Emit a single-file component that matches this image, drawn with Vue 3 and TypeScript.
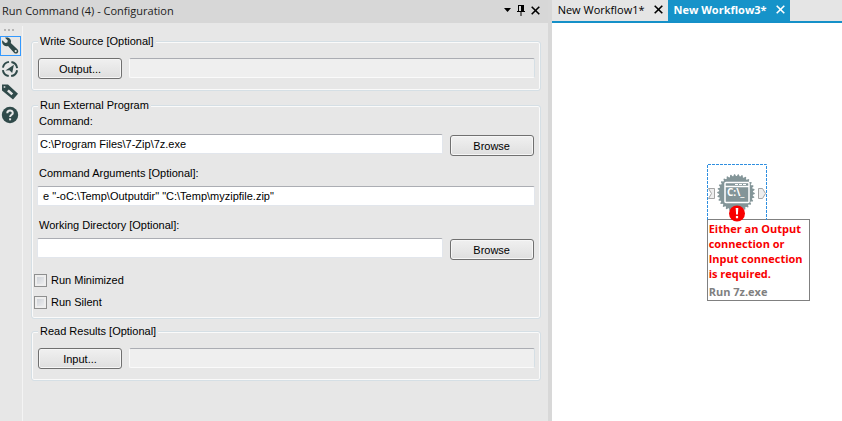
<script setup lang="ts">
import { ref } from 'vue'

interface Tab {
  id: number
  title: string
}

const tabs: Tab[] = [
  { id: 1, title: 'New Workflow1*' },
  { id: 3, title: 'New Workflow3*' },
]
const activeTab = ref(3)

const command = ref('C:\\Program Files\\7-Zip\\7z.exe')
const commandArgs = ref(' e "-oC:\\Temp\\Outputdir" "C:\\Temp\\myzipfile.zip"')
const workingDir = ref('')
const runMinimized = ref(false)
const runSilent = ref(false)

/* Outline of the toothed badge behind the tool glyph */
const teeth = 30
const gear = Array.from({ length: teeth * 4 }, (_, i) => {
  const r = i % 4 < 2 ? 18.8 : 17
  const a = (i / (teeth * 4)) * Math.PI * 2
  return `${(19 + r * Math.cos(a)).toFixed(2)},${(19 + r * Math.sin(a)).toFixed(2)}`
}).join(' ')
</script>

<template>
  <div class="app">
    <section class="panel">
      <header class="titlebar">
        <h1>Run Command (4) - Configuration</h1>
        <div class="window-tools">
          <button type="button" class="plain" aria-label="Window menu">
            <svg width="7" height="4" viewBox="0 0 7 4"><path d="M0 0h7L3.5 4z" /></svg>
          </button>
          <button type="button" class="plain" aria-label="Pin">
            <svg width="8" height="11" viewBox="0 0 8 11">
              <path d="M1 0h6v6h1v1H4.5v4h-1V7H0V6h1zM2 1v5h2V1z" fill-rule="evenodd" />
            </svg>
          </button>
          <button type="button" class="plain" aria-label="Close">
            <svg width="9" height="9" viewBox="0 0 9 9"><path class="cross" d="M.7.7l7.6 7.6M8.3.7L.7 8.3" /></svg>
          </button>
        </div>
      </header>

      <div class="body">
        <nav class="sidebar">
          <div class="grip"><i></i><i></i><i></i></div>
          <button type="button" class="side selected" aria-label="Configuration">
            <svg width="18" height="18" viewBox="0 0 18 18">
              <path d="M1.2 3.2L4.2 6 6.3 5.5 6.8 3.5 4 .7C6 0 8.2.5 9.3 2.2c.8 1.2.9 2.5.5 3.8l6.6 6.2c1.1 1.1 1.2 2.7.2 3.7s-2.6.9-3.6-.2L7 8.9c-1.4.5-3 .3-4.2-.7C1.3 6.900.7 5 1.2 3.2zM14.7 13a1.1 1.1 0 1 0 0 2.2 1.1 1.1 0 0 0 0-2.2z" fill-rule="evenodd" />
            </svg>
          </button>
          <button type="button" class="side" aria-label="Navigation">
            <svg width="18" height="18" viewBox="0 0 18 18">
              <circle class="ring" cx="9" cy="9" r="7.2" />
              <path d="M12.9 4.8L11.2 13 8.4 10.2 4.4 10.4z" />
            </svg>
          </button>
          <button type="button" class="side" aria-label="Annotation">
            <svg width="18" height="18" viewBox="0 0 18 18">
              <path d="M1 1.5h6l10 9.3-5 5.7L1 7.5zM2.7 3.2v1.6h1.6V3.2zM7.8 6.4L6 8.2l4.4 4 1.8-1.8z" fill-rule="evenodd" />
            </svg>
          </button>
          <button type="button" class="side" aria-label="Help">
            <svg width="18" height="18" viewBox="0 0 18 18">
              <circle cx="9" cy="9" r="8.2" />
              <path class="mark" d="M6.3 7.2C6.3 3.6 11.8 3.7 11.8 6.9 11.8 8.8 9.1 8.8 9.1 11" />
              <path class="mark" d="M9.1 12.3v2" />
            </svg>
          </button>
        </nav>

        <form class="form" @submit.prevent>
          <fieldset class="source">
            <legend>Write Source [Optional]</legend>
            <div class="row single">
              <button type="button" class="btn">Output...</button>
              <input class="field" type="text" disabled aria-label="Output source" />
            </div>
          </fieldset>

          <fieldset class="program">
            <legend>Run External Program</legend>
            <div class="group">
              <label for="command">Command:</label>
              <div class="row">
                <input id="command" v-model="command" class="field" type="text" />
                <button type="button" class="btn browse">Browse</button>
              </div>
            </div>
            <div class="group">
              <label for="args">Command Arguments [Optional]:</label>
              <div class="row">
                <input id="args" v-model="commandArgs" class="field" type="text" />
              </div>
            </div>
            <div class="group">
              <label for="workdir">Working Directory [Optional]:</label>
              <div class="row">
                <input id="workdir" v-model="workingDir" class="field" type="text" />
                <button type="button" class="btn browse">Browse</button>
              </div>
            </div>
            <div class="checks">
              <label class="check"><input v-model="runMinimized" type="checkbox" />Run Minimized</label>
              <label class="check"><input v-model="runSilent" type="checkbox" />Run Silent</label>
            </div>
          </fieldset>

          <fieldset>
            <legend>Read Results [Optional]</legend>
            <div class="row single">
              <button type="button" class="btn">Input...</button>
              <input class="field" type="text" disabled aria-label="Input results" />
            </div>
          </fieldset>
        </form>
      </div>
    </section>

    <main class="workspace">
      <div class="tabs">
        <div v-for="tab in tabs" :key="tab.id" class="tab" :class="{ active: tab.id === activeTab }">
          <button type="button" class="plain" @click="activeTab = tab.id">{{ tab.title }}</button>
          <button type="button" class="plain" :aria-label="'Close ' + tab.title">
            <svg width="9" height="9" viewBox="0 0 9 9"><path class="cross" d="M.7.7l7.6 7.6M8.3.7L.7 8.3" /></svg>
          </button>
        </div>
      </div>

      <div class="canvas">
        <div class="node">
          <div class="tool">
            <svg width="60" height="56" viewBox="0 0 60 56">
              <path class="selection" d="M.5 56V.5h59V56" />
              <path class="anchor" d="M1.5 24.5h6v10h-6l3-5z" />
              <path class="anchor" d="M51.500 24.500h4l3 5-3 5h-4z" />
              <g transform="translate(10 10)">
                <polygon class="badge" :points="gear" />
                <rect class="window" x="8" y="8.500" width="24" height="20" rx="1" />
                <path class="window" d="M8 12.500h24" />
                <path class="dots" d="M18 10.500h12" />
              </g>
              <text class="prompt" x="20" y="32">C:\_</text>
              <circle class="alert" cx="30" cy="49.500" r="8" />
              <path class="bang" d="M28.700 44h2.600l-.4 6.500h-1.800zM28.900 52h2.200v2.200h-2.200z" />
            </svg>
          </div>
          <div class="note">
            <p class="error">Either an Output connection or Input connection is required.</p>
            <p class="caption">Run 7z.exe</p>
          </div>
        </div>
      </div>
    </main>
  </div>
</template>

<style>
body {
  margin: 0;
}
</style>

<style scoped>
.app {
  display: flex;
  min-height: 100vh;
  background: #fff;
  color: #000;
  font-family: 'Liberation Sans', sans-serif;
  font-size: 11px;
  line-height: 14px;
}
.panel {
  display: flex;
  flex-direction: column;
  flex: 547 1 0;
  min-width: 0;
  background: #e7e7e7;
  border-right: 4px solid #d8d8d8;
}
.titlebar {
  display: flex;
  align-items: center;
  justify-content: space-between;
  height: 23px;
  padding: 0 8px 0 2px;
  background: #d7d7d7;
}
h1 {
  margin: 0;
  padding-bottom: 2px;
  font: 11px/16px 'Open Sans', sans-serif;
  color: #1c1c1c;
}
.window-tools {
  display: flex;
  align-items: center;
  gap: 6px;
  padding-bottom: 3px;
}
.plain {
  display: flex;
  align-items: center;
  padding: 0;
  border: 0;
  background: none;
  color: inherit;
  font: inherit;
}
.cross {
  fill: none;
  stroke: currentColor;
  stroke-width: 1.6;
}
.body {
  display: flex;
  flex: 1;
}
.sidebar {
  display: flex;
  flex-direction: column;
  width: 22px;
  margin-top: 3px;
  border-right: 1px solid #f4f4f4;
}
.grip {
  display: flex;
  gap: 2px;
  padding: 3px 0 5px 4px;
}
.grip i {
  width: 2px;
  height: 2px;
  background: #b4b4b4;
}
.side {
  display: flex;
  align-items: center;
  justify-content: flex-start;
  width: 21px;
  height: 20px;
  margin-bottom: 3px;
  padding: 0;
  border: 1px solid transparent;
  background: none;
  fill: #304a4a;
}
.side svg {
  flex: none;
}
.side.selected {
  border-color: #3399ff;
}
.ring {
  fill: none;
  stroke: #304a4a;
  stroke-width: 2;
  stroke-dasharray: 8.8 2.5;
  stroke-dashoffset: -1.25;
}
.mark {
  fill: none;
  stroke: #e7e7e7;
  stroke-width: 2;
}
.form {
  display: flex;
  flex-direction: column;
  flex: 1;
  gap: 5px;
  min-width: 0;
  padding: 11px 7px 11px 8px;
}
fieldset {
  min-width: 0;
  margin: 0;
  padding: 0 5px 11px;
  border: 1px solid #d5dfe5;
  border-radius: 3px;
  box-shadow: inset 0 0 0 1px #fafafa;
}
.source {
  margin-bottom: 2px;
}
.program {
  padding-bottom: 9px;
}
legend {
  margin-left: 1px;
  padding: 0 2px;
  background: #e7e7e7;
}
.row {
  display: flex;
  align-items: flex-start;
  gap: 7px;
  min-height: 22px;
}
.row.single {
  min-height: 21px;
  padding: 10px 0 0 1px;
}
.btn {
  flex: none;
  width: 84px;
  height: 21px;
  padding: 0;
  border: 1px solid #707070;
  border-radius: 3px;
  background: linear-gradient(#f0f0f0, #e6e6e6 60%, #dedede);
  box-shadow: inset 0 0 0 1px #f6f6f6;
  color: #000;
  font: inherit;
}
.browse {
  margin: 1px 1px 0 0;
}
.field {
  box-sizing: border-box;
  flex: 1;
  min-width: 0;
  height: 20px;
  padding: 0 2px;
  border: 1px solid #e2e6ec;
  border-top-color: #abadb3;
  border-radius: 2px;
  background: #fff;
  color: #000;
  font: inherit;
}
.field:disabled {
  background: #efefef;
  border-color: #abadb3 #d5dfe5 #fafafa #fafafa;
}
.group {
  padding: 2px 0 8px;
}
.group > label {
  display: block;
  padding: 0 2px 6px;
}
.checks {
  display: flex;
  flex-direction: column;
  gap: 8px;
  margin: 5px 0 0 -3px;
}
.check {
  display: flex;
  align-items: center;
  gap: 4px;
}
.check input {
  appearance: none;
  width: 13px;
  height: 13px;
  margin: 0;
  border: 1px solid #8e8f8f;
  background: linear-gradient(135deg, #c6cbd2, #f4f4f4);
  box-shadow: inset 0 0 0 2px #eee;
}
.check input:checked {
  background: #304a4a;
}
.workspace {
  display: flex;
  flex-direction: column;
  flex: 290 1 0;
  min-width: 0;
}
.tabs {
  display: flex;
  height: 21px;
  background: #e5e5e5;
  border-bottom: 2px solid #1590c8;
}
.tab {
  display: flex;
  align-items: center;
  gap: 9px;
  box-sizing: border-box;
  padding: 0 5px 2px 6px;
  font: 11px/16px 'Open Sans', sans-serif;
  white-space: nowrap;
}
.tab.active {
  background: #1693c9;
  color: #fff;
  font-weight: 700;
}
.canvas {
  position: relative;
  flex: 1;
}
.node {
  position: absolute;
  left: 155px;
  top: 141px;
  width: 103px;
}
.tool {
  position: relative;
  z-index: 1;
}
.tool svg {
  display: block;
  overflow: visible;
}
.selection {
  fill: none;
  stroke: #2f8fe0;
  stroke-dasharray: 3 1;
}
.anchor {
  fill: #eee;
  stroke: #a5a5a5;
}
.badge {
  fill: #839598;
}
.window {
  fill: none;
  stroke: #fff;
  stroke-width: 1.5;
}
.dots {
  fill: none;
  stroke: #fff;
  stroke-dasharray: 3 1;
}
.prompt {
  fill: #fff;
  font: bold 10px 'Open Sans', sans-serif;
}
.alert {
  fill: #f80000;
}
.bang {
  fill: #fff;
}
.note {
  box-sizing: border-box;
  margin-top: -1px;
  padding: 1px;
  border: 1px solid #808080;
  background: #fff;
  font: bold 11px/15px 'Open Sans', sans-serif;
}
.note p {
  margin: 0;
}
.error {
  color: #f80000;
}
.caption {
  padding: 3px 0 0;
  color: #808080;
}
</style>
